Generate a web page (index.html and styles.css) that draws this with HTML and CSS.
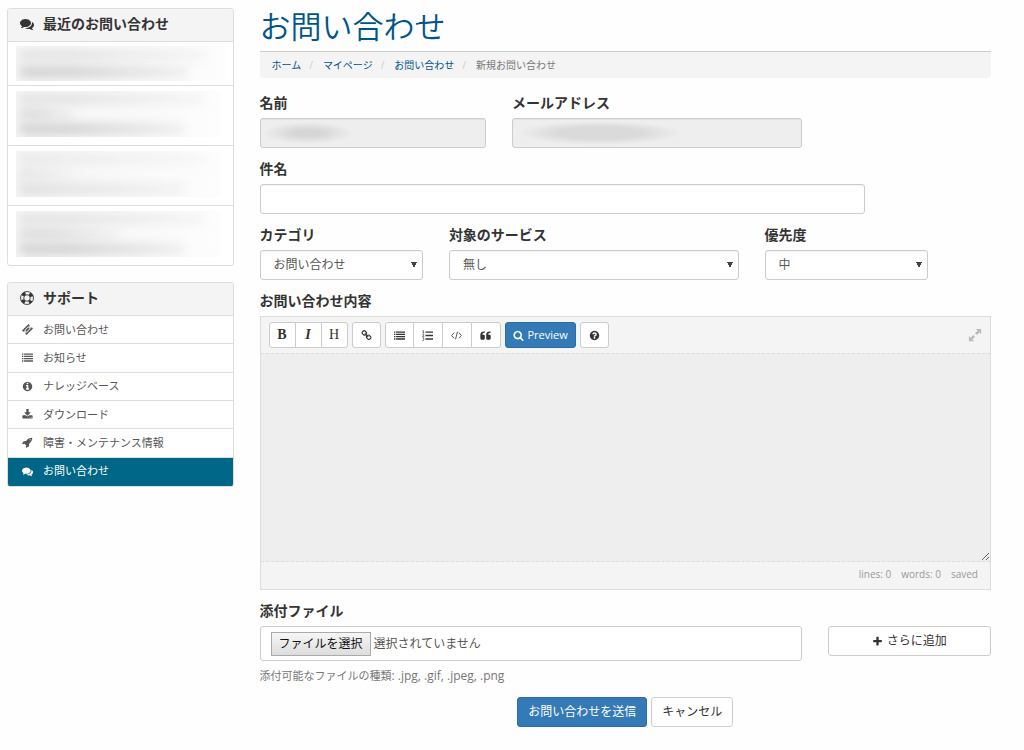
FILE: index.html
```html
<!DOCTYPE html>
<html lang="ja">
<head>
<meta charset="utf-8">
<title>お問い合わせ</title>
<meta name="viewport" content="width=device-width, initial-scale=1">
<link rel="stylesheet" href="styles.css">
</head>
<body>
<svg class="sprite" aria-hidden="true">
  <symbol id="i-comments" viewBox="0 0 1792 1792"><path d="M1408 768q0 139-94 257t-256.500 186.500-353.500 68.500q-86 0-176-16-124 88-278 128-36 9-86 16h-3q-11 0-20.500-8t-11.500-21q-1-3-1-6.500t.5-6.500 2-6l2.500-5 3.500-5.500 4-5 4.500-5 4-4.500q5-6 23-25t26-29.500 22.500-29 25-38.500 20.500-44q-124-72-195-177t-71-224q0-139 94-257t256.500-186.500 353.500-68.500 353.500 68.500 256.500 186.500 94 257zm384 256q0 120-71 224.500t-195 176.500q10 24 20.500 44t25 38.500 22.500 29 26 29.500 23 25q1 1 4 4.500t4.500 5 4 5 3.500 5.500l2.500 5 2 6 .5 6.500-1 6.500q-3 14-13 22t-22 7q-50-7-86-16-154-40-278-128-90 16-176 16-271 0-472-132 58 4 88 4 161 0 309-45t264-129q125-92 192-212t67-254q0-77-23-152 129 71 204 178t75 230z"/></symbol>
  <symbol id="i-ring" viewBox="0 0 16 16"><g fill="none" stroke="currentColor"><circle cx="8" cy="8" r="7.400" stroke-width="1"/><circle cx="8" cy="8" r="3.700" stroke-width="1"/><circle cx="8" cy="8" r="5.600" stroke-width="3.600" stroke-dasharray="4.400 4.396" stroke-dashoffset="2.200" transform="rotate(45 8 8)"/></g></symbol>
  <symbol id="i-ticket" viewBox="0 0 16 16"><path fill-rule="evenodd" d="M9.500 0 11.200 1.700A1.700 1.700 0 0 0 14.300 4.800L16 6.500 6.500 16 4.800 14.300A1.700 1.700 0 0 0 1.700 11.200L0 9.500ZM9.300 3.300 3.300 9.300 6.700 12.700 12.700 6.700ZM9.300 4.800 11.200 6.700 6.700 11.200 4.800 9.300Z"/></symbol>
  <symbol id="i-list" viewBox="0 0 16 16"><path d="M0 2h2v2H0zM3 2h13v2H3zM0 5.300h2v2H0zM3 5.300h13v2H3zM0 8.700h2v2H0zM3 8.700h13v2H3zM0 12h2v2H0zM3 12h13v2H3z"/></symbol>
  <symbol id="i-info" viewBox="0 0 1792 1792"><path d="M1152 1376v-160q0-14-9-23t-23-9h-96v-512q0-14-9-23t-23-9h-320q-14 0-23 9t-9 23v160q0 14 9 23t23 9h96v320h-96q-14 0-23 9t-9 23v160q0 14 9 23t23 9h448q14 0 23-9t9-23zm-128-896v-160q0-14-9-23t-23-9h-192q-14 0-23 9t-9 23v160q0 14 9 23t23 9h192q14 0 23-9t9-23zm640 416q0 209-103 385.500t-279.500 279.500-385.500 103-385.500-103-279.500-279.500-103-385.500 103-385.500 279.500-279.500 385.500-103 385.500 103 279.500 279.500 103 385.500z"/></symbol>
  <symbol id="i-download" viewBox="0 0 1792 1792"><path d="M1344 1344q0-26-19-45t-45-19-45 19-19 45 19 45 45 19 45-19 19-45zm256 0q0-26-19-45t-45-19-45 19-19 45 19 45 45 19 45-19 19-45zm128-224v320q0 40-28 68t-68 28h-1472q-40 0-68-28t-28-68v-320q0-40 28-68t68-28h465l135 136q58 56 136 56t136-56l136-136h464q40 0 68 28t28 68zm-325-569q17 41-14 70l-448 448q-18 19-45 19t-45-19l-448-448q-31-29-14-70 17-39 59-39h256v-448q0-26 19-45t45-19h256q26 0 45 19t19 45v448h256q42 0 59 39z"/></symbol>
  <symbol id="i-rocket" viewBox="0 0 1792 1792"><path d="M1440 448q0-40-28-68t-68-28-68 28-28 68 28 68 68 28 68-28 28-68zm224-288q0 249-75.500 430.500t-253.500 360.500q-81 80-195 176l-20 379q-2 16-16 26l-384 224q-7 4-16 4-12 0-23-9l-64-64q-13-14-8-32l85-276-281-281-276 85q-3 1-9 1-14 0-23-9l-64-64q-17-19-5-39l224-384q10-14 26-16l379-20q96-114 176-195 188-187 358-258t431-71q14 0 24 9.500t10 22.500z"/></symbol>
  <symbol id="i-link" viewBox="0 0 1792 1792"><path d="M1520 1216q0-40-28-68l-208-208q-28-28-68-28-42 0-72 32 3 3 19 18.500t21.500 21.500 15 19 13 25.500 3.500 27.500q0 40-28 68t-68 28q-15 0-27.500-3.500t-25.500-13-19-15-21.500-21.500-18.500-19q-33 31-33 73 0 40 28 68l206 207q27 27 68 27 40 0 68-26l147-146q28-28 28-67zm-703-705q0-40-28-68l-206-207q-28-28-68-28-39 0-68 27l-147 146q-28 28-28 67 0 40 28 68l208 208q27 27 68 27 42 0 72-31-3-3-19-18.500t-21.500-21.500-15-19-13-25.500-3.500-27.500q0-40 28-68t68-28q15 0 27.500 3.500t25.500 13 19 15 21.500 21.500 18.500 19q33-31 33-73zm895 705q0 120-85 203l-147 146q-83 83-203 83-121 0-204-85l-206-207q-83-83-83-203 0-123 88-209l-88-88q-86 88-208 88-120 0-204-84l-208-208q-84-84-84-204t85-203l147-146q83-83 203-83 121 0 204 85l206 207q83 83 83 203 0 123-88 209l88 88q86-88 208-88 120 0 204 84l208 208q84 84 84 204z"/></symbol>
  <symbol id="i-ol" viewBox="0 0 16 16"><path d="M5 2h11v2H5zM5 7h11v2H5zM5 12h11v2H5z"/><path fill="none" stroke="currentColor" stroke-width=".9" d="M.8 1.200 2 .6V4.400M.6 4.400H3.300M.7 6.700Q2.900 5.500 2.900 7.200L.7 9.700H3.300M.7 11.500H3L1.900 13Q3.200 13.200 2.900 14.500T.6 15.300"/></symbol>
  <symbol id="i-code" viewBox="0 0 16 16"><path fill="none" stroke="currentColor" stroke-width="1.200" d="M4.500 4 .9 8l3.600 4M11.500 4l3.600 4-3.600 4M9.400 2.500 6.600 13.500"/></symbol>
  <symbol id="i-quote" viewBox="0 0 16 16"><path d="M7 2v2H6Q3.500 4 3.500 6.500V7H5.500Q7 7 7 8.500V12.500Q7 14 5.500 14H2Q.5 14 .5 12.500V7Q.5 2 6 2ZM15.500 2v2h-1Q12 4 12 6.500V7h2Q15.500 7 15.500 8.500v4Q15.500 14 14 14h-3.500Q9 14 9 12.500V7Q9 2 14.500 2Z"/></symbol>
  <symbol id="i-search" viewBox="0 0 1792 1792"><path d="M1216 832q0-185-131.500-316.500t-316.500-131.500-316.500 131.500-131.500 316.500 131.500 316.500 316.500 131.500 316.500-131.500 131.500-316.500zm512 832q0 52-38 90t-90 38q-54 0-90-38l-343-342q-179 124-399 124-143 0-273.500-55.500t-225-150-150-225-55.500-273.500 55.500-273.500 150-225 225-150 273.500-55.500 273.500 55.500 225 150 150 225 55.500 273.500q0 220-124 399l343 343q37 37 37 90z"/></symbol>
  <symbol id="i-help" viewBox="0 0 1792 1792"><path d="M1024 1376v-192q0-14-9-23t-23-9h-192q-14 0-23 9t-9 23v192q0 14 9 23t23 9h192q14 0 23-9t9-23zm256-672q0-88-55.500-163t-138.500-116-170-41q-243 0-371 213-15 24 8 42l132 100q7 6 19 6 16 0 25-12 53-68 86-92 34-24 86-24 48 0 85.500 26t37.500 59q0 38-20 61t-68 45q-63 28-115.500 86.500t-52.500 125.500v36q0 14 9 23t23 9h192q14 0 23-9t9-23q0-19 21.500-49.500t54.500-49.500q32-18 49-28.500t46-35 44.500-48 28-60.500 12.500-81zm384 192q0 209-103 385.500t-279.500 279.500-385.500 103-385.500-103-279.500-279.500-103-385.500 103-385.500 279.500-279.500 385.500-103 385.500 103 279.500 279.500 103 385.500z"/></symbol>
  <symbol id="i-expand" viewBox="0 0 16 16"><path d="M9 1h6v6l-2-2-3 3-2-2 3-3ZM7 15H1V9l2 2 3-3 2 2-3 3Z"/></symbol>
  <symbol id="i-plus" viewBox="0 0 1792 1792"><path d="M1600 736v192q0 40-28 68t-68 28h-416v416q0 40-28 68t-68 28h-192q-40 0-68-28t-28-68v-416h-416q-40 0-68-28t-28-68v-192q0-40 28-68t68-28h416v-416q0-40 28-68t68-28h192q40 0 68 28t28 68v416h416q40 0 68 28t28 68z"/></symbol>
</svg>

<div class="page">
  <aside class="sidebar">
    <section class="panel">
      <h2 class="panel-title"><svg class="icon icon-lg"><use href="#i-comments"/></svg>最近のお問い合わせ</h2>
      <ul class="recent">
        <li class="recent-item recent-short"><div class="smudge"><i class="w-full"></i><i class="w-large"></i></div></li>
        <li class="recent-item"><div class="smudge"><i class="w-full"></i><i class="w-small"></i><i class="w-large"></i></div></li>
        <li class="recent-item"><div class="smudge smudge-pale"><i class="w-full"></i><i class="w-small"></i><i class="w-large"></i></div></li>
        <li class="recent-item"><div class="smudge"><i class="w-full"></i><i class="w-mid"></i><i class="w-large"></i></div></li>
      </ul>
    </section>
    <nav class="panel">
      <h2 class="panel-title"><svg class="icon icon-lg"><use href="#i-ring"/></svg>サポート</h2>
      <div class="menu">
        <a class="menu-item" href="#"><svg class="icon"><use href="#i-ticket"/></svg>お問い合わせ</a>
        <a class="menu-item" href="#"><svg class="icon"><use href="#i-list"/></svg>お知らせ</a>
        <a class="menu-item" href="#"><svg class="icon"><use href="#i-info"/></svg>ナレッジベース</a>
        <a class="menu-item" href="#"><svg class="icon"><use href="#i-download"/></svg>ダウンロード</a>
        <a class="menu-item" href="#"><svg class="icon"><use href="#i-rocket"/></svg>障害・メンテナンス情報</a>
        <a class="menu-item active" href="#" aria-current="page"><svg class="icon"><use href="#i-comments"/></svg>お問い合わせ</a>
      </div>
    </nav>
  </aside>

  <main class="main">
    <h1 class="title">お問い合わせ</h1>
    <ol class="breadcrumb">
      <li><a href="#">ホーム</a></li>
      <li><a href="#">マイページ</a></li>
      <li><a href="#">お問い合わせ</a></li>
      <li>新規お問い合わせ</li>
    </ol>
    <form class="form">
      <div class="field span-4"><label for="name">名前</label><input class="control masked masked-name" id="name" type="text" disabled></div>
      <div class="field span-5"><label for="email">メールアドレス</label><input class="control masked masked-email" id="email" type="email" disabled></div>
      <div class="field span-10 row-start"><label for="subject">件名</label><input class="control" id="subject" type="text"></div>
      <div class="field span-3 row-start"><label for="category">カテゴリ</label><select class="control" id="category"><option>お問い合わせ</option></select></div>
      <div class="field span-5"><label for="service">対象のサービス</label><select class="control" id="service"><option>無し</option></select></div>
      <div class="field span-3"><label for="priority">優先度</label><select class="control" id="priority"><option>中</option></select></div>

      <div class="field span-12">
        <label for="message">お問い合わせ内容</label>
        <div class="editor">
          <div class="toolbar">
            <div class="group">
              <button class="tool serif bold" type="button">B</button>
              <button class="tool serif italic" type="button">I</button>
              <button class="tool serif" type="button">H</button>
            </div>
            <div class="group"><button class="tool wide" type="button" aria-label="リンク"><svg class="icon"><use href="#i-link"/></svg></button></div>
            <div class="group">
              <button class="tool wide" type="button" aria-label="箇条書き"><svg class="icon"><use href="#i-list"/></svg></button>
              <button class="tool wide" type="button" aria-label="番号付きリスト"><svg class="icon"><use href="#i-ol"/></svg></button>
              <button class="tool wide" type="button" aria-label="コード"><svg class="icon"><use href="#i-code"/></svg></button>
              <button class="tool wide" type="button" aria-label="引用"><svg class="icon"><use href="#i-quote"/></svg></button>
            </div>
            <div class="group"><button class="tool preview" type="button"><svg class="icon"><use href="#i-search"/></svg>Preview</button></div>
            <div class="group"><button class="tool wide" type="button" aria-label="ヘルプ"><svg class="icon"><use href="#i-help"/></svg></button></div>
            <button class="expand" type="button" aria-label="全画面"><svg class="icon icon-lg"><use href="#i-expand"/></svg></button>
          </div>
          <textarea class="message" id="message"></textarea>
          <div class="status"><span>lines: 0</span><span>words: 0</span><span>saved</span></div>
        </div>
      </div>

      <div class="field span-9">
        <label for="file">添付ファイル</label>
        <div class="file-box">
          <input class="file-input" id="file" type="file">
          <label class="file-button" for="file">ファイルを選択</label>
          <span>選択されていません</span>
        </div>
        <p class="help">添付可能なファイルの種類<span class="types">: .jpg, .gif, .jpeg, .png</span></p>
      </div>
      <div class="span-3 add"><button class="btn" type="button"><svg class="icon"><use href="#i-plus"/></svg>さらに追加</button></div>
      <div class="actions span-12">
        <button class="btn primary" type="submit">お問い合わせを送信</button>
        <button class="btn" type="reset">キャンセル</button>
      </div>
    </form>
  </main>
</div>
</body>
</html>
```
FILE: styles.css
```css
* { box-sizing: border-box; }

body {
  margin: 0;
  background: #fefefe;
  color: #333;
  font: 12px/16px "Open Sans", "Noto Sans CJK JP", sans-serif;
}

h1, h2, ul, ol, p { margin: 0; padding: 0; list-style: none; }
a { text-decoration: none; }
button, input, select, textarea { font: inherit; color: inherit; }

.sprite { display: none; }
.icon { width: 11px; height: 11px; flex: none; fill: currentColor; }
.icon-lg { width: 14px; height: 14px; }

.page {
  display: grid;
  grid-template-columns: repeat(12, minmax(0, 1fr));
  column-gap: 26px;
  padding: 8px 33px 20px 7px;
}
.sidebar { grid-column: span 3; }
.main { grid-column: span 9; }

/* Sidebar */
.panel {
  margin-bottom: 16px;
  border: 1px solid #ddd;
  border-radius: 3px;
  background: #fff;
  overflow: hidden;
}
.panel-title {
  display: flex;
  align-items: center;
  gap: 9px;
  height: 33px;
  padding: 0 12px 2px;
  border-bottom: 1px solid #ddd;
  background: #f4f4f4;
  font-size: 14px;
  line-height: 20px;
}
.recent-item { height: 60px; padding: 5px 13px 8px 8px; border-bottom: 1px solid #ddd; }
.recent-short { height: 44px; padding: 4px 8px; }
.recent-item:last-child { height: 59px; border-bottom: 0; }
.smudge {
  display: flex;
  flex-direction: column;
  justify-content: space-around;
  height: 100%;
  padding-left: 4px;
  background: linear-gradient(90deg, #f5f5f5, #fdfdfd);
  overflow: hidden;
}
.smudge i { height: 12px; background: linear-gradient(90deg, #d4d4d4 30%, #f0f0f0); filter: blur(5px); }
.smudge-pale i { background: linear-gradient(90deg, #dfdfdf, #f3f3f3); }
.w-full { width: 92%; opacity: .5; }
.w-large { width: 82%; }
.w-mid { width: 50%; opacity: .7; }
.w-small { width: 28%; opacity: .7; }

.menu { display: grid; grid-template-rows: repeat(6, 1fr); height: 170px; }
.menu-item {
  display: flex;
  align-items: center;
  gap: 10px;
  padding: 0 14px;
  border-bottom: 1px solid #ddd;
  color: #555;
  font-size: 11px;
}
.menu-item.active { border-color: #006687; background: #006687; color: #fff; }

/* Heading */
.title {
  height: 44px;
  border-bottom: 1px solid #ccc;
  color: #058;
  font-size: 31px;
  font-weight: 350;
  line-height: 36px;
}
.breadcrumb {
  display: flex;
  height: 26px;
  padding: 5px 12px;
  border-radius: 0 0 3px 3px;
  background: #f4f4f4;
  color: #777;
  font-size: 10px;
}
.breadcrumb a { color: #058; }
.breadcrumb li + li::before { content: "/"; padding: 0 10px 0 8px; color: #ccc; }

/* Form */
.form {
  display: grid;
  grid-template-columns: repeat(12, minmax(0, 1fr));
  gap: 11px 26px;
  padding-top: 15px;
}
.span-3 { grid-column-end: span 3; }
.span-4 { grid-column-end: span 4; }
.span-5 { grid-column-end: span 5; }
.span-9 { grid-column-end: span 9; }
.span-10 { grid-column-end: span 10; }
.span-12 { grid-column-end: span 12; }
.row-start { grid-column-start: 1; }
.field > label { display: block; margin-bottom: 5px; font-size: 14px; font-weight: 700; line-height: 20px; }
.control {
  display: block;
  width: 100%;
  height: 30px;
  padding: 0 13px;
  border: 1px solid #ccc;
  border-radius: 3px;
  background-color: #fff;
  color: #555;
  box-shadow: inset 0 1px 1px #0000000d;
}
select.control {
  appearance: none;
  background-image: conic-gradient(from -27deg at 50% 100%, #444 54deg, transparent 0);
  background-repeat: no-repeat;
  background-position: right 5px center;
  background-size: 6px 6px;
}
.masked { background-color: #eee; background-repeat: no-repeat; }
.masked-name { background-image: radial-gradient(closest-side, #d6d6d6 30%, #eee0); background-size: 90px 22px; background-position: 2px 3px; }
.masked-email { background-image: radial-gradient(closest-side, #dadada 50%, #eee0); background-size: 165px 24px; background-position: 4px 2px; }

/* Editor */
.editor { border: 1px solid #ddd; background: #f4f4f4; }
.toolbar { display: flex; align-items: center; gap: 4px; height: 36px; padding: 0 8px; }
.group { display: flex; }
.tool {
  display: flex;
  align-items: center;
  justify-content: center;
  gap: 4px;
  height: 26px;
  min-width: 26px;
  padding: 0 7px;
  border: 1px solid #ccc;
  background: #fff;
  font-size: 11px;
}
.tool + .tool { margin-left: -1px; }
.tool:first-child { border-radius: 3px 0 0 3px; }
.tool:last-child { border-radius: 0 3px 3px 0; }
.tool:only-child { border-radius: 3px; }
.wide { width: 29px; }
.tool + .wide { width: 30px; }
.serif { width: 27px; font-family: "Liberation Serif", serif; font-size: 14px; }
.bold { font-weight: 700; }
.italic { font-style: italic; font-weight: 700; }
.preview { padding: 0 7px; border-color: #2e6da4; background: #337ab7; color: #fff; }
.expand { display: flex; margin-left: auto; padding: 0; border: 0; background: none; color: #bbb; }
.message {
  display: block;
  width: 100%;
  height: 209px;
  padding: 8px;
  border: dashed #ddd;
  border-width: 1px 0;
  background: #eee;
  resize: vertical;
}
.status { display: flex; justify-content: flex-end; gap: 10px; padding: 4px 12px 7px; color: #999; font-size: 10px; }

/* Attachments */
.file-box {
  position: relative;
  display: flex;
  align-items: center;
  gap: 3px;
  height: 35px;
  padding: 0 10px;
  border: 1px solid #ccc;
  border-radius: 3px;
  background: #fff;
  color: #555;
}
.file-input { position: absolute; width: 1px; height: 1px; opacity: 0; }
.file-button {
  padding: 3px 7px;
  border: 1px solid #aaa;
  background: linear-gradient(#f6f6f6, #ddd);
  color: #111;
}
.help { padding-top: 7px; color: #777; font-size: 11px; }
.types { font-size: 12px; }
.add { padding-top: 25px; }
.add .btn { width: 100%; }
.btn {
  display: flex;
  align-items: center;
  justify-content: center;
  gap: 4px;
  height: 30px;
  padding: 0 10px;
  border: 1px solid #ccc;
  border-radius: 3px;
  background: #fff;
}
.btn.primary { border-color: #2e6da4; background: #337ab7; color: #fff; }
.actions { display: flex; justify-content: center; gap: 4px; padding-top: 2px; }
```
